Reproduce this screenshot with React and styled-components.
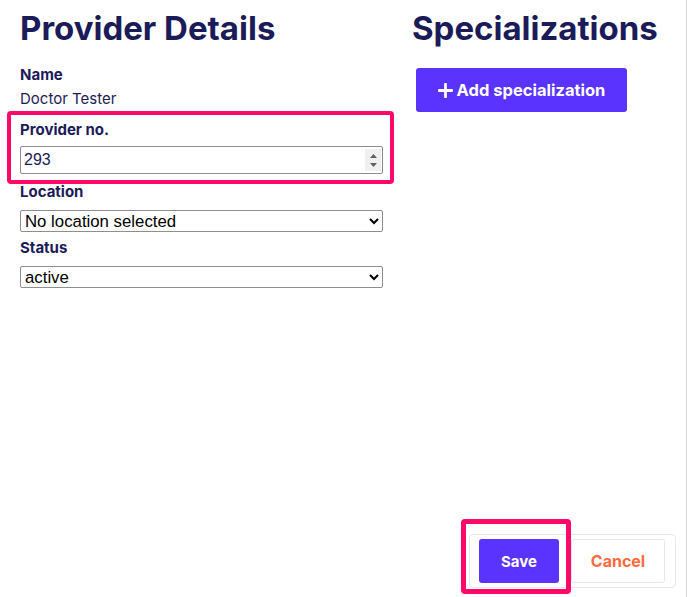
import React, { useState } from "react";
import styled, { createGlobalStyle } from "styled-components";

const GlobalStyle = createGlobalStyle`
  html, body {
    margin: 0;
    padding: 0;
    background: #ffffff;
  }
  * {
    box-sizing: border-box;
  }
`;

const Page = styled.div`
  display: flex;
  flex-direction: column;
  width: 687px;
  height: 597px;
  border-right: 1px solid #d6d6dc;
  overflow: hidden;
`;

const Columns = styled.div`
  display: grid;
  grid-template-columns: 363px 1fr;
  column-gap: 29px;
  padding: 8px 0 0 20px;
`;

const Column = styled.section`
  display: flex;
  flex-direction: column;
`;

const Heading = styled.h1`
  margin: 0 0 17px;
  font-family: "Inter", "Open Sans", sans-serif;
  font-weight: 700;
  font-size: 33px;
  line-height: 40px;
  letter-spacing: 0;
  color: #1c1b59;
  white-space: nowrap;
`;

const Field = styled.div`
  display: flex;
  flex-direction: column;
  margin-bottom: ${(p) => p.gap || 0}px;
`;

const Highlight = styled.div`
  display: flex;
  flex-direction: column;
  margin: 1px -11px -2px -13px;
  padding: 5px 7px 6px 9px;
  border: 4px solid #ff0a68;
  border-radius: 4px;
`;

const Label = styled.label`
  font-family: "Inter", "Lato", sans-serif;
  font-weight: 700;
  font-size: 15px;
  line-height: 20px;
  color: #1c1b59;
  margin-bottom: ${(p) => p.space || 0}px;
`;

const Value = styled.div`
  font-family: "Inter", "Lato", sans-serif;
  font-size: 15px;
  line-height: 20px;
  color: #1c1b59;
`;

const InputWrap = styled.div`
  position: relative;
  width: 363px;
`;

const NumberInput = styled.input`
  width: 100%;
  height: 28px;
  padding: 0 3px;
  font-family: "Liberation Sans", Arial, sans-serif;
  font-size: 16px;
  color: #1c1b59;
  border: 1px solid #8e8e8e;
  border-radius: 2px;
  background: #ffffff;
  outline: none;
  caret-color: #1c1b59;
  -moz-appearance: textfield;

  &::-webkit-inner-spin-button,
  &::-webkit-outer-spin-button {
    -webkit-appearance: none;
    margin: 0;
  }
`;

const Spinner = styled.div`
  position: absolute;
  top: 3px;
  right: 2px;
  width: 16px;
  height: 22px;
  display: flex;
  flex-direction: column;
  align-items: center;
  justify-content: center;
  gap: 5px;
  background: #f0f0f0;
`;

const Select = styled.select`
  width: 363px;
  height: 22px;
  padding: 0;
  font-family: "Liberation Sans", Arial, sans-serif;
  font-size: 16.8px;
  color: #000000;
  border: 1px solid #8e8e8e;
  border-radius: 2px;
  background: #ffffff;
`;

const PrimaryButton = styled.button`
  display: inline-flex;
  align-items: center;
  justify-content: center;
  gap: 4px;
  width: ${(p) => p.width}px;
  height: ${(p) => p.height}px;
  border: none;
  border-radius: 3px;
  background: #5a33ff;
  color: #ffffff;
  font-family: "Inter", "Open Sans", sans-serif;
  font-weight: 700;
  font-size: ${(p) => p.size || 15}px;
  cursor: pointer;
`;

const AddButton = styled(PrimaryButton)`
  margin-left: 4px;
  margin-top: 3px;
`;

const Footer = styled.div`
  margin-top: auto;
  display: flex;
  justify-content: flex-end;
  padding: 0 10px 9px 0;
`;

const ButtonBar = styled.div`
  display: flex;
  align-items: center;
  gap: 12px;
  padding: 4px 10px 4px 9px;
  border: 1px solid #e6e6ee;
  border-radius: 4px;
`;

const SaveWrap = styled.div`
  position: relative;
  display: flex;
`;

const SaveMark = styled.div`
  position: absolute;
  left: -18px;
  top: -20px;
  right: -12px;
  bottom: -11px;
  border: 5px solid #ff0a68;
  border-radius: 4px;
  pointer-events: none;
`;

const CancelButton = styled.button`
  width: 94px;
  height: 44px;
  border: 1px solid #e6e6ee;
  border-radius: 3px;
  background: #ffffff;
  color: #ff6b3d;
  font-family: "Inter", "Open Sans", sans-serif;
  font-weight: 700;
  font-size: 16px;
  cursor: pointer;
`;

const PlusIcon = () => (
  <svg width="15" height="15" viewBox="0 0 14 14">
    <path d="M7 1v12M1 7h12" stroke="#fff" strokeWidth="2.6" strokeLinecap="round" />
  </svg>
);

const Arrow = ({ up }) => (
  <svg width="7" height="4" viewBox="0 0 7 4">
    <path d={up ? "M0 4L3.5 0L7 4Z" : "M0 0L3.5 4L7 0Z"} fill="#5f5f5f" />
  </svg>
);

export default function App() {
  const [providerNo, setProviderNo] = useState("293");
  const [location, setLocation] = useState("");
  const [status, setStatus] = useState("active");

  return (
    <Page>
      <GlobalStyle />
      <Columns>
        <Column>
          <Heading>Provider Details</Heading>
          <Field gap={1}>
            <Label space={4}>Name</Label>
            <Value>Doctor Tester</Value>
          </Field>
          <Highlight>
            <Label space={6}>Provider no.</Label>
            <InputWrap>
              <NumberInput
                type="number"
                value={providerNo}
                autoFocus
                onChange={(e) => setProviderNo(e.target.value)}
              />
              <Spinner>
                <Arrow up />
                <Arrow />
              </Spinner>
            </InputWrap>
          </Highlight>
          <Field gap={6}>
            <Label space={8}>Location</Label>
            <Select value={location} onChange={(e) => setLocation(e.target.value)}>
              <option value="">No location selected</option>
            </Select>
          </Field>
          <Field>
            <Label space={8}>Status</Label>
            <Select value={status} onChange={(e) => setStatus(e.target.value)}>
              <option value="active">active</option>
              <option value="inactive">inactive</option>
            </Select>
          </Field>
        </Column>
        <Column>
          <Heading>Specializations</Heading>
          <AddButton width={211} height={44} size={16.5}>
            <PlusIcon />
            Add specialization
          </AddButton>
        </Column>
      </Columns>
      <Footer>
        <ButtonBar>
          <SaveWrap>
            <PrimaryButton width={80} height={44}>Save</PrimaryButton>
            <SaveMark />
          </SaveWrap>
          <CancelButton>Cancel</CancelButton>
        </ButtonBar>
      </Footer>
    </Page>
  );
}
